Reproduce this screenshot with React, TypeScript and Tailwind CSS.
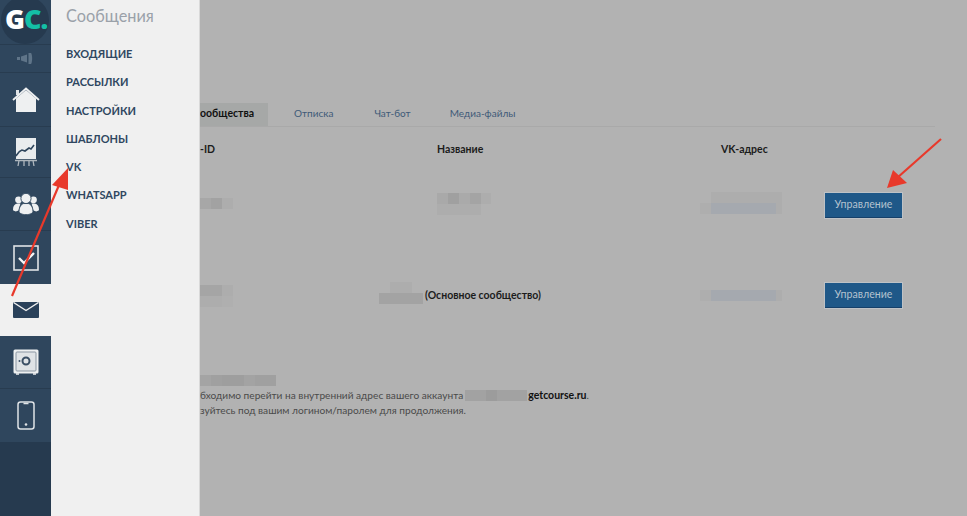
const SANS = "font-['Lato','Open_Sans',sans-serif]";

type Cell = [number, number, number, number, string];

function Mosaic({ w, h, cells }: { w: number; h: number; cells: Cell[] }) {
  return (
    <svg width={w} height={h} className="block shrink-0">
      {cells.map(([x, y, cw, ch, fill], i) => (
        <rect key={i} x={x} y={y} width={cw} height={ch} fill={fill} />
      ))}
    </svg>
  );
}

function NavItem({ children, h, active, dark }: { children?: React.ReactNode; h: string; active?: boolean; dark?: boolean }) {
  return (
    <div
      className={`flex items-center justify-center ${h} ${
        active ? "bg-[#f0f0f0]" : dark ? "bg-[#2f465d]" : "bg-[#2f465d] border-b border-[#283c50]"
      }`}
    >
      {children}
    </div>
  );
}

const Home = () => (
  <svg width="28" height="26" viewBox="0 0 28 26">
    <path d="M4 3h3v5H4z" fill="#dfe3e6" />
    <path d="M4 11.500 14 3l10 8.500V25H4z" fill="#eef0f1" />
    <path d="M1 13 14 1.500 27 13" fill="none" stroke="#eef0f1" strokeWidth="1.800" />
  </svg>
);
const Chart = () => (
  <svg width="22" height="28" viewBox="0 0 22 28">
    <rect x="1" y="0" width="20" height="21" fill="#e9ecee" />
    <path d="M1 18c2-3 3-5 6-6l3 1 4-3 2 1 3-4" fill="none" stroke="#2f465d" strokeWidth="1.600" />
    <path d="M0 22.500h22M4 22.500l-1 5.500M9 22.500V28M14 22.500V28M18 22.500l1 5.500" stroke="#aeb6bd" strokeWidth="1.300" fill="none" />
  </svg>
);
const Users = () => (
  <svg width="26" height="24" viewBox="0 0 28 24" fill="#eef0f1">
    <circle cx="6" cy="7.500" r="3.700" />
    <circle cx="22" cy="7.500" r="3.700" />
    <path d="M0 18c0-4 2-6 5-6.500h3L6 19l-3 1c-2-.4-3-1-3-2zM28 18c0-4-2-6-5-6.500h-3l2 7.500 3 1c2-.4 3-1 3-2z" />
    <circle cx="14" cy="6" r="5.500" stroke="#2f465d" strokeWidth="1" />
    <path d="M6.500 20c0-5 2.500-8 5-8.500h5c2.500.5 5 3.500 5 8.500 0 2-3.500 3.500-7.500 3.500S6.500 22 6.500 20z" stroke="#2f465d" strokeWidth="1" />
  </svg>
);
const Check = () => (
  <svg width="26" height="26" viewBox="0 0 26 26">
    <rect x="1" y="1" width="24" height="24" fill="none" stroke="#dfe3e6" strokeWidth="1.600" />
    <path d="M6 13 11 18 21 8" fill="none" stroke="#f4f5f6" strokeWidth="2.400" />
  </svg>
);
const Mail = () => (
  <svg width="26" height="16" viewBox="0 0 26 16">
    <rect width="26" height="16" rx="1" fill="#2a415a" />
    <path d="M0.500 0.500 13 8.500 25.500 0.500" fill="none" stroke="#f0f0f0" strokeWidth="1.400" />
  </svg>
);
const Safe = () => (
  <svg width="26" height="26" viewBox="0 0 26 26">
    <rect x="0.500" y="0.500" width="25" height="24" rx="1.500" fill="#eef0f1" />
    <rect x="3" y="3" width="20" height="19" rx="1" fill="#dfe3e6" stroke="#8b97a3" strokeWidth="1" />
    <circle cx="13" cy="12" r="3.500" fill="none" stroke="#3a4f65" strokeWidth="2" />
    <circle cx="6.500" cy="12" r="1" fill="#3a4f65" />
    <path d="M3 25h3M20 25h3" stroke="#eef0f1" strokeWidth="1.500" />
  </svg>
);
const Phone = () => (
  <svg width="18" height="29" viewBox="0 0 18 29">
    <rect x="1" y="1" width="16" height="27" rx="2.500" fill="none" stroke="#dfe3e6" strokeWidth="1.500" />
    <path d="M6.500 2.500h5" stroke="#dfe3e6" strokeWidth="1.500" />
    <circle cx="9" cy="23.500" r="1.300" fill="#dfe3e6" />
  </svg>
);
const Speaker = () => (
  <svg width="17" height="11" viewBox="0 0 17 11" fill="#5f7488">
    <rect x="0" y="4" width="3" height="3" />
    <path d="M4 3.500 10 1.500v8l-6-2z" />
    <path d="M11.500 0h2.500c1.500 1.500 1.500 9.500 0 11h-2.500z" />
  </svg>
);

function Logo() {
  return (
    <div className="relative h-[45px] overflow-hidden border-b border-[#283c50] bg-[#2f465d]">
      <div className="absolute left-[1px] top-[-4px] h-[48px] w-[48px] rounded-full bg-[#263a4f]" />
      <div className="absolute left-[5px] top-[2px] flex items-baseline font-['Open_Sans',sans-serif] text-[27px] leading-[34px] font-extrabold tracking-[-1px]">
        <span className="text-white">G</span>
        <span className="text-[#14bfa6]">C</span>
        <span className="text-[#14bfa6]">.</span>
      </div>
    </div>
  );
}

const MENU = ["ВХОДЯЩИЕ", "РАССЫЛКИ", "НАСТРОЙКИ", "ШАБЛОНЫ", "VK", "WHATSAPP", "VIBER"];

function Button() {
  return (
    <div className="flex h-[25px] w-[77px] items-center justify-center border-b border-b-[#15406a] bg-[#1f5888] text-[10.6px] text-[#b4c2cf] shadow-[0_0_0_1px_#bec2c6]">
      Управление
    </div>
  );
}

export default function App() {
  return (
    <div className={`relative flex h-[516px] w-[967px] overflow-hidden bg-[#b2b2b2] ${SANS}`}>
      <nav className="flex w-[51px] shrink-0 flex-col bg-[#263a4f]">
        <Logo />
        <NavItem h="h-[28px]"><Speaker /></NavItem>
        <NavItem h="h-[54px]"><Home /></NavItem>
        <NavItem h="h-[51px]"><Chart /></NavItem>
        <NavItem h="h-[53px]"><Users /></NavItem>
        <NavItem h="h-[53px]" dark><Check /></NavItem>
        <NavItem h="h-[52px]" active><Mail /></NavItem>
        <NavItem h="h-[53px]"><Safe /></NavItem>
        <NavItem h="h-[53px]" dark><Phone /></NavItem>
      </nav>

      <aside className="flex w-[149px] shrink-0 flex-col border-r border-[#d9d9d9] bg-[#f0f0f0] pl-[15px]">
        <div className="mt-[6px] text-[16.3px] leading-[20px] text-[#9aa1a9]">Сообщения</div>
        <ul className="mt-[14px] flex flex-col">
          {MENU.map((m) => (
            <li key={m} className="h-[28.3px] text-[11px] leading-[28px] font-bold text-[#2f4760]">
              {m}
            </li>
          ))}
        </ul>
      </aside>

      <main className="flex min-w-0 flex-1 flex-col overflow-hidden pt-[103px] pr-[32px]">
        <div className="flex h-[24px] items-stretch border-b border-[#a9a9a9] text-[10px] leading-[21px]">
          <div className="w-[68px] overflow-hidden bg-[#a6a8a7] text-[10.5px] font-bold text-[#111]">ообщества</div>
          <div className="ml-[26px] text-[#3f5a78]">Отписка</div>
          <div className="ml-[41px] text-[#3f5a78]">Чат-бот</div>
          <div className="ml-[39px] text-[#3f5a78]">Медиа-файлы</div>
        </div>

        <div className="mt-[15px] flex h-[14px] text-[10.5px] leading-[14px] font-bold text-[#1c1c1c]">
          <div className="w-[237px]">-ID</div>
          <div className="w-[284px]">Название</div>
          <div>VK-адрес</div>
        </div>

        <div className="mt-[37px] flex h-[25px] items-center">
          <div className="w-[237px] pb-[4px]">
            <Mosaic w={33} h={11} cells={[[0, 0, 11, 11, "#a7a7a7"], [11, 0, 11, 11, "#a2a2a2"], [22, 0, 11, 11, "#adadad"]]} />
          </div>
          <div className="w-[263px] pb-[3px]">
            <Mosaic w={54} h={22} cells={[[0, 0, 11, 11, "#a9a9a9"], [11, 0, 11, 11, "#a0a0a0"], [22, 0, 11, 11, "#aaaaaa"], [33, 0, 11, 11, "#a4a4a4"], [44, 0, 10, 11, "#adadad"], [0, 11, 44, 11, "#adadad"]]} />
          </div>
          <div className="w-[125px] pb-[5px]">
            <Mosaic w={82} h={22} cells={[[11, 0, 71, 11, "#adadad"], [0, 11, 11, 11, "#aeaeae"], [11, 11, 65, 11, "#a5a9af"], [76, 11, 6, 11, "#adadad"]]} />
          </div>
          <Button />
        </div>

        <div className="mt-[65px] flex h-[25px] items-center">
          <div className="w-[179px]">
            <Mosaic w={33} h={22} cells={[[0, 0, 22, 11, "#a5a5a5"], [22, 0, 11, 11, "#adadad"], [0, 11, 22, 11, "#adadad"], [22, 11, 11, 11, "#afafaf"]]} />
          </div>
          <div className="flex w-[321px] items-center">
            <div className="pb-[6px]">
              <Mosaic w={44} h={22} cells={[[11, 0, 22, 11, "#adadad"], [0, 11, 44, 11, "#a3a3a3"]]} />
            </div>
            <span className="ml-[2px] text-[10.5px] font-bold text-[#1c1c1c]">(Основное сообщество)</span>
          </div>
          <div className="w-[125px]">
            <Mosaic w={82} h={11} cells={[[0, 0, 11, 11, "#aeaeae"], [11, 0, 65, 11, "#a5a9af"], [76, 0, 6, 11, "#adadad"]]} />
          </div>
          <Button />
        </div>

        <div className="mt-[67px]">
          <Mosaic w={76} h={11} cells={[[0, 0, 11, 11, "#a4a4a4"], [11, 0, 11, 11, "#a0a0a0"], [22, 0, 22, 11, "#9e9e9e"], [44, 0, 11, 11, "#a3a3a3"], [55, 0, 21, 11, "#a0a0a0"]]} />
        </div>
        <div className="mt-[2px] flex h-[15px] items-center text-[10.15px] text-[#4a4a4a]">
          бходимо перейти на внутренний адрес вашего аккаунта
          <div className="ml-[2px]">
            <Mosaic w={62} h={11} cells={[[0, 0, 21, 11, "#a2a2a2"], [21, 0, 11, 11, "#9c9c9c"], [32, 0, 30, 11, "#a2a2a2"]]} />
          </div>
          <span className="ml-[1px] text-[10.5px] font-bold text-[#111]">getcourse.ru</span>.
        </div>
        <div className="h-[15px] text-[10.15px] leading-[15px] text-[#4a4a4a]">
          зуйтесь под вашим логином/паролем для продолжения.
        </div>
      </main>

      <svg className="pointer-events-none absolute inset-0" width="967" height="516" viewBox="0 0 967 516">
        <path d="M12 296 62 178" stroke="#e8392b" strokeWidth="2.2" fill="none" />
        <path d="M68 168 52 185 68 190z" fill="#e8392b" />
        <path d="M941 139 897 178" stroke="#e8392b" strokeWidth="2.2" fill="none" />
        <path d="M887 188 893 170 907 183z" fill="#e8392b" />
      </svg>
    </div>
  );
}
